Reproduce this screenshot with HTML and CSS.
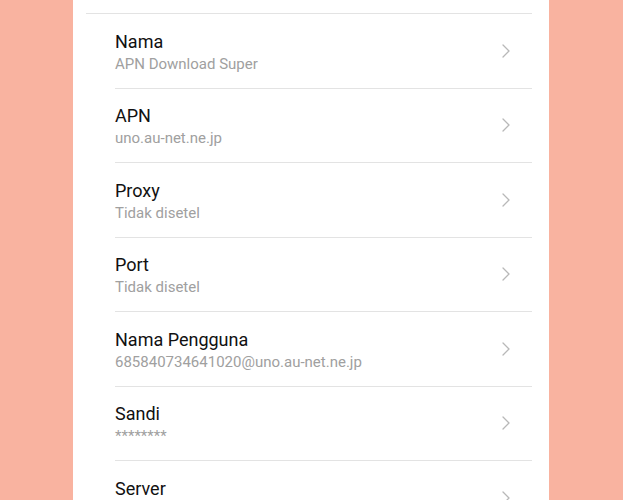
FILE: index.html
```html
<!DOCTYPE html>
<html>
<head>
<meta charset="utf-8">
<link rel="stylesheet" href="styles.css">
</head>
<body>
<div class="panel">
  <div class="header-line"></div>
  <ul class="list">
    <li class="row"><div class="text"><div class="title">Nama</div><div class="sub">APN Download Super</div></div><svg class="chev" viewBox="0 0 8 14"><path d="M1 1 L7 7 L1 13"/></svg></li>
    <li class="row"><div class="text"><div class="title">APN</div><div class="sub">uno.au-net.ne.jp</div></div><svg class="chev" viewBox="0 0 8 14"><path d="M1 1 L7 7 L1 13"/></svg></li>
    <li class="row"><div class="text"><div class="title">Proxy</div><div class="sub">Tidak disetel</div></div><svg class="chev" viewBox="0 0 8 14"><path d="M1 1 L7 7 L1 13"/></svg></li>
    <li class="row"><div class="text"><div class="title">Port</div><div class="sub">Tidak disetel</div></div><svg class="chev" viewBox="0 0 8 14"><path d="M1 1 L7 7 L1 13"/></svg></li>
    <li class="row"><div class="text"><div class="title">Nama Pengguna</div><div class="sub">685840734641020@uno.au-net.ne.jp</div></div><svg class="chev" viewBox="0 0 8 14"><path d="M1 1 L7 7 L1 13"/></svg></li>
    <li class="row"><div class="text"><div class="title">Sandi</div><div class="sub">********</div></div><svg class="chev" viewBox="0 0 8 14"><path d="M1 1 L7 7 L1 13"/></svg></li>
    <li class="row"><div class="text"><div class="title">Server</div><div class="sub">Tidak disetel</div></div><svg class="chev" viewBox="0 0 8 14"><path d="M1 1 L7 7 L1 13"/></svg></li>
  </ul>
</div>
</body>
</html>
```
FILE: styles.css
```css
html, body {
  margin: 0;
  padding: 0;
  height: 100%;
  overflow: hidden;
}
body {
  background: #f9b3a0;
  font-family: Roboto, "Liberation Sans", sans-serif;
}
.panel {
  margin-left: 73px;
  width: 476px;
  height: 100%;
  background: #ffffff;
  padding-top: 13px;
  box-sizing: border-box;
  overflow: hidden;
}
.header-line {
  margin-left: 13px;
  margin-right: 17px;
  height: 1px;
  background: #e3e3e3;
}
.list {
  list-style: none;
  margin: 0;
  padding: 0 17px 0 42px;
}
.row {
  height: 73.5px;
  border-bottom: 1px solid #e3e3e3;
  display: flex;
  align-items: center;
  justify-content: space-between;
}
.text {
  display: flex;
  flex-direction: column;
  padding-top: 4px;
}
.title {
  font-size: 18px;
  line-height: 22px;
  color: #111111;
}
.sub {
  font-size: 15px;
  line-height: 22px;
  color: #a0a0a0;
}
.chev {
  width: 8px;
  height: 14px;
  margin-right: 22px;
  fill: none;
  stroke: #b8b8b8;
  stroke-width: 1.3;
  stroke-linecap: round;
  stroke-linejoin: round;
}
```
